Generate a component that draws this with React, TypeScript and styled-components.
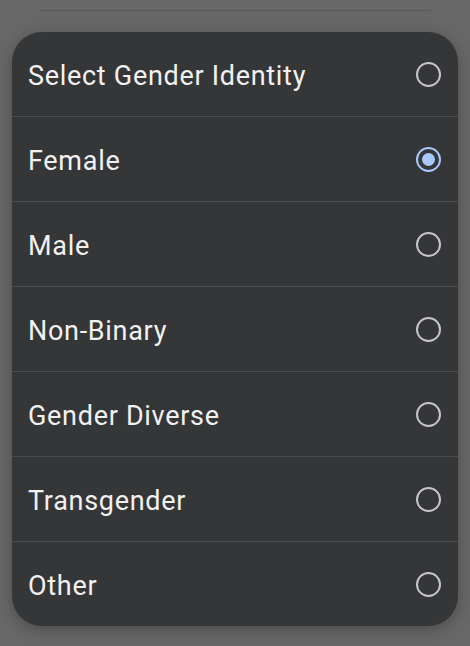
import { useState } from 'react';
import styled, { createGlobalStyle } from 'styled-components';

const GlobalStyle = createGlobalStyle`
  html, body {
    margin: 0;
    padding: 0;
    background: #676767;
    font-family: Roboto, 'Noto Sans', sans-serif;
  }
`;

const Page = styled.div`
  width: 470px;
  height: 646px;
  overflow: hidden;
  display: flex;
  flex-direction: column;
`;

const Backdrop = styled.div`
  height: 10px;
  margin: 0 39px 0 40px;
  border-bottom: 1px solid #5a5a5a;
  flex-shrink: 0;
`;

const Sheet = styled.ul`
  list-style: none;
  margin: 21px 12px 0 12px;
  padding: 0;
  background: #353638;
  border-radius: 30px;
  overflow: hidden;
  box-shadow: 0 4px 14px rgba(0, 0, 0, 0.25);
`;

const Row = styled.li`
  height: 84px;
  display: flex;
  align-items: center;
  justify-content: space-between;
  padding: 0 17px 0 16px;
  border-top: 1px solid #4b4c4e;
  cursor: pointer;

  &:first-child {
    border-top: none;
  }
`;

const Label = styled.span`
  color: #f1f1f1;
  font-size: 27px;
  letter-spacing: 0.7px;
  padding-top: 4px;
`;

const Radio = styled.span<{ $checked: boolean }>`
  width: 25px;
  height: 25px;
  box-sizing: border-box;
  border-radius: 50%;
  border: 2.5px solid ${(p) => (p.$checked ? '#a8c7fa' : '#c6c6c8')};
  display: flex;
  align-items: center;
  justify-content: center;

  &::after {
    content: '';
    display: ${(p) => (p.$checked ? 'block' : 'none')};
    width: 13px;
    height: 13px;
    border-radius: 50%;
    background: #a8c7fa;
  }
`;

const options = [
  'Select Gender Identity',
  'Female',
  'Male',
  'Non-Binary',
  'Gender Diverse',
  'Transgender',
  'Other',
];

const App = () => {
  const [selected, setSelected] = useState<string>('Female');

  return (
    <Page>
      <GlobalStyle />
      <Backdrop />
      <Sheet>
        {options.map((option) => (
          <Row key={option} onClick={() => setSelected(option)}>
            <Label>{option}</Label>
            <Radio $checked={selected === option} />
          </Row>
        ))}
      </Sheet>
    </Page>
  );
};

export default App;
